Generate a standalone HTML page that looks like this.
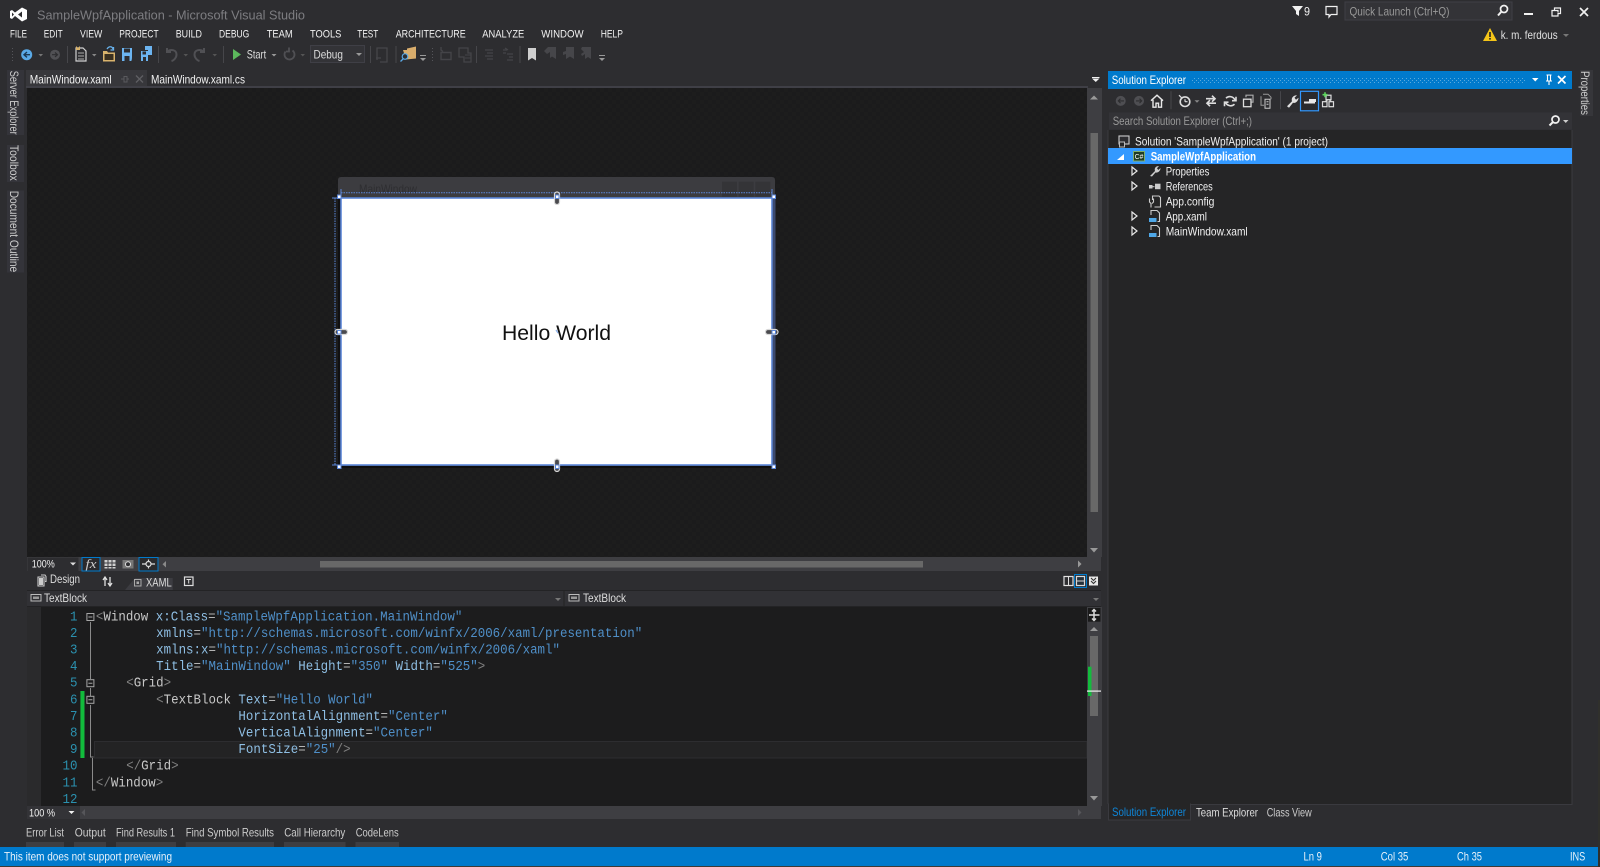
<!DOCTYPE html>
<html><head><meta charset="utf-8"><title>SampleWpfApplication - Microsoft Visual Studio</title>
<style>
html,body{margin:0;padding:0;background:#2d2d30;overflow:hidden}
svg{display:block;filter:blur(.3px)}
text{font-family:"Liberation Sans",sans-serif;font-size:12px;fill:#f1f1f1;white-space:pre}
.m{font-size:11px;fill:#f1f1f1}
.c{font-family:"Liberation Mono",monospace;font-size:14px;fill:#c8c8c8}
.n{fill:#2b91af;text-anchor:end}
.d{fill:#808080}.a{fill:#8fbfe4}.v{fill:#4f8fc8}.e{fill:#b4b4b4}
.dim{fill:#5a5a5e}
</style></head><body>
<svg width="1600" height="867" viewBox="0 0 1600 867" xmlns="http://www.w3.org/2000/svg">
<defs>
<pattern id="chk" width="8" height="8" patternUnits="userSpaceOnUse"><rect width="8" height="8" fill="#1b1b1c"/><rect width="4" height="4" fill="#1d1d1d"/><rect x="4" y="4" width="4" height="4" fill="#1d1d1d"/></pattern>
<pattern id="gr" width="4" height="4" patternUnits="userSpaceOnUse"><rect width="1" height="1" fill="#5aa9dd"/><rect x="2" y="2" width="1" height="1" fill="#5aa9dd"/></pattern>
<pattern id="tg" width="3" height="3" patternUnits="userSpaceOnUse"><rect width="1" height="1" fill="#55555a"/></pattern>
</defs>
<rect width="1600" height="867" fill="#2d2d30"/>

<!-- title bar -->
<path fill="#fff" fill-rule="evenodd" d="M10 11L12 10L15 12.5L22 7.5L27 10L27 19L22 21.5L15 16L12 19L10 18ZM22 11.5L18 14.5L22 17.5ZM12 12.5L14 14.5L12 16.5Z"/>
<text x="37" y="19.500" style="font-size:13px;fill:#7d7d81" textLength="268" lengthAdjust="spacingAndGlyphs">SampleWpfApplication - Microsoft Visual Studio</text>
<path fill="#f1f1f1" d="M1292 6h11l-4 5v5l-3-2v-3z"/>
<text x="1304" y="15.500" textLength="6" lengthAdjust="spacingAndGlyphs">9</text>
<path fill="none" stroke="#f1f1f1" stroke-width="1.2" d="M1326 6.500h11v8h-6l-2 2.500v-2.500h-3z"/>
<rect x="1345" y="2" width="167" height="18" fill="#333337" stroke="#3f3f46"/>
<text x="1349.500" y="15.500" style="fill:#999" textLength="100" lengthAdjust="spacingAndGlyphs">Quick Launch (Ctrl+Q)</text>
<circle cx="1504" cy="9" r="3.500" fill="none" stroke="#f1f1f1" stroke-width="1.7"/><path stroke="#f1f1f1" stroke-width="2" d="M1501.500 11.500L1498 15.500"/>
<rect x="1524" y="13" width="9" height="2" fill="#f1f1f1"/>
<path fill="none" stroke="#f1f1f1" stroke-width="1.2" d="M1554.500 10.500h-2.500v5.500h6v-3M1554.500 10.500v-2.500h6v5.500h-2.500M1554.500 10.500h3.500v2"/>
<path stroke="#f1f1f1" stroke-width="1.7" d="M1580 8l8 8M1588 8l-8 8"/>
<path d="M1490 28l7 13h-14z" fill="#f5c518"/><rect x="1489.200" y="32" width="1.600" height="5" fill="#222"/><rect x="1489.200" y="38" width="1.600" height="1.600" fill="#222"/>
<text x="1500.700" y="39" textLength="57" lengthAdjust="spacingAndGlyphs" style="fill:#e0e0e0">k. m. ferdous</text>
<path d="M1563 34h6l-3 3z" fill="#777"/>

<!-- menu -->
<g class="menu">
<text class="m" x="10" y="37.700" textLength="17" lengthAdjust="spacingAndGlyphs">FILE</text>
<text class="m" x="43.700" y="37.700" textLength="19" lengthAdjust="spacingAndGlyphs">EDIT</text>
<text class="m" x="80" y="37.700" textLength="22.300" lengthAdjust="spacingAndGlyphs">VIEW</text>
<text class="m" x="119.300" y="37.700" textLength="39.300" lengthAdjust="spacingAndGlyphs">PROJECT</text>
<text class="m" x="175.700" y="37.700" textLength="26.300" lengthAdjust="spacingAndGlyphs">BUILD</text>
<text class="m" x="219" y="37.700" textLength="30.300" lengthAdjust="spacingAndGlyphs">DEBUG</text>
<text class="m" x="266.700" y="37.700" textLength="26" lengthAdjust="spacingAndGlyphs">TEAM</text>
<text class="m" x="310" y="37.700" textLength="31.400" lengthAdjust="spacingAndGlyphs">TOOLS</text>
<text class="m" x="357.300" y="37.700" textLength="21" lengthAdjust="spacingAndGlyphs">TEST</text>
<text class="m" x="395.700" y="37.700" textLength="70" lengthAdjust="spacingAndGlyphs">ARCHITECTURE</text>
<text class="m" x="482.300" y="37.700" textLength="42" lengthAdjust="spacingAndGlyphs">ANALYZE</text>
<text class="m" x="541.300" y="37.700" textLength="42.300" lengthAdjust="spacingAndGlyphs">WINDOW</text>
<text class="m" x="600.700" y="37.700" textLength="22.300" lengthAdjust="spacingAndGlyphs">HELP</text>
</g>

<!-- toolbar -->
<rect x="11" y="46" width="4" height="15" fill="url(#tg)"/>
<circle cx="26.700" cy="54.700" r="5.500" fill="#5aa9e6"/><path d="M30 54.700h-5M27 52l-3 2.700 3 2.700" stroke="#1c3a55" stroke-width="1.400" fill="none"/>
<path d="M38.500 54h4.500l-2.250 2.500z" fill="#777"/>
<circle cx="55" cy="54.700" r="5" fill="#505054"/><path d="M52 54.700h5M55 52.500l2.500 2.200-2.500 2.200" stroke="#2d2d30" stroke-width="1.200" fill="none"/>
<rect x="67" y="46" width="1" height="17" fill="#46464a"/>
<path d="M76 48h7l3 3v10h-10z" fill="#2d2d30" stroke="#d0d0d0" stroke-width="1.200"/><path d="M76 46l2 2 2-2v4h-4z" fill="#d9b36c"/><path d="M78 53h6M78 56h6M78 59h6" stroke="#aaa"/>
<path d="M92 54h4.500l-2.250 2.500z" fill="#888"/>
<path d="M103 51h4l1 1.500h7v9h-12z" fill="#d9b36c"/><rect x="104.500" y="54" width="9" height="6" fill="#3a3020"/><path d="M107 49c2-3 5-3 6 0M113.500 47v3h-3" stroke="#68b2ec" stroke-width="1.300" fill="none"/>
<path d="M122 48h10v8c0 1 0 5-1 5h-9z" fill="#6cb4f0"/><rect x="124" y="48.500" width="6" height="4" fill="#2d2d30"/><rect x="124.500" y="56" width="5" height="5" fill="#2d2d30"/>
<path d="M141 51h7v10h-7z" fill="#6cb4f0"/><path d="M145 46h7v9h-4v-5h-3z" fill="#6cb4f0"/><rect x="142.500" y="51.500" width="3.500" height="3" fill="#2d2d30"/><rect x="143" y="57" width="3" height="4" fill="#2d2d30"/>
<rect x="158" y="46" width="1" height="17" fill="#46464a"/>
<path d="M167 48v4h4M167.500 51.500c3-2.500 9-2 9 3 0 3-2.500 6-5 6.500" stroke="#505054" stroke-width="2" fill="none"/>
<path d="M183.500 54h4.500l-2.250 2.500z" fill="#555"/>
<path d="M204 48v4h-4M203.500 51.500c-3-2.500-9-2-9 3 0 3 2.500 6 5 6.500" stroke="#505054" stroke-width="2" fill="none"/>
<path d="M212.500 54h4.500l-2.250 2.500z" fill="#555"/>
<rect x="223" y="46" width="1" height="17" fill="#46464a"/>
<path d="M233 49v11l8-5.500z" fill="#5cb85c"/>
<text x="246.700" y="58.500" textLength="19.500" lengthAdjust="spacingAndGlyphs" style="fill:#ddd">Start</text>
<path d="M271.500 54h5l-2.500 2.500z" fill="#999"/>
<path d="M292.500 50.500a5 5 0 1 1-7 1M289 47.500v4h-3" stroke="#505054" stroke-width="1.800" fill="none"/>
<path d="M300.500 54h4.500l-2.250 2.500z" fill="#555"/>
<rect x="310.500" y="45.500" width="54" height="17" fill="#333337" stroke="#3f3f46"/>
<text x="313.500" y="58.500" textLength="29.400" lengthAdjust="spacingAndGlyphs" style="fill:#ddd">Debug</text>
<path d="M356 53h6l-3 3z" fill="#999"/>
<rect x="370" y="46" width="1" height="17" fill="#46464a"/>
<path d="M377 60v-12h10v14h-7M376 58h5" stroke="#46464a" stroke-width="1.300" fill="none"/>
<rect x="395.500" y="46" width="1" height="17" fill="#46464a"/>
<path d="M403 50h4v-1.500l9-2v12l-10 1z" fill="#d9ad6c"/><circle cx="405" cy="56.500" r="2.800" fill="#2d2d30" stroke="#5aa9e6" stroke-width="1.200"/><path d="M403 59l-2.500 2.500" stroke="#5aa9e6" stroke-width="1.300"/>
<rect x="420" y="55" width="6" height="1" fill="#999"/><path d="M420 58h6l-3 3z" fill="#999"/>
<rect x="430" y="46" width="4" height="15" fill="url(#tg)"/>
<path d="M441 47v3l2 1.500M441 52.500h10v7h-10z" stroke="#444448" stroke-width="1.400" fill="none"/>
<path d="M459 48h9v5h3v9h-7v-5h-5z" stroke="#444448" stroke-width="1.300" fill="none"/><path d="M465 55h6M465 58h6" stroke="#444448"/>
<rect x="476" y="46" width="1" height="17" fill="#46464a"/>
<path d="M485 50h8M487 53h6M485 56h8M487 59h6" stroke="#444448" stroke-width="1.300"/>
<path d="M503 50h4M503 53h3M507 54h6M509 57h4M507 60h6M505 48l3 2" stroke="#444448" stroke-width="1.300" fill="none"/>
<rect x="519.500" y="46" width="1" height="17" fill="#46464a"/>
<path d="M528 48h8v12.500l-4-2.500-4 2.500z" fill="#cfcfcf"/>
<path d="M548 47h8v12l-4-2.500-2 1.500v-6l-3 2-3-3 3-3z" fill="#46464a"/>
<path d="M566 47h8v12l-4-2.500-4 2.500v-5l-3 1v-3l3-1z" fill="#46464a"/>
<path d="M584 47h7v12l-3-2-3 2v-5l-3 2-1-2 3-2-3-3 1-2z" fill="#46464a"/>
<rect x="599" y="55" width="6" height="1" fill="#999"/><path d="M599 58h6l-3 3z" fill="#999"/>

<!-- left strip -->
<rect x="7" y="70" width="17" height="65" fill="#34343a"/>
<rect x="7" y="145" width="17" height="37" fill="#34343a"/>
<rect x="7" y="190.500" width="17" height="82" fill="#34343a"/>
<text transform="translate(10,70.700) rotate(90)" textLength="64" lengthAdjust="spacingAndGlyphs" style="fill:#ccc">Server Explorer</text>
<text transform="translate(10,145) rotate(90)" textLength="35.700" lengthAdjust="spacingAndGlyphs" style="fill:#ccc">Toolbox</text>
<text transform="translate(10,190.700) rotate(90)" textLength="81.500" lengthAdjust="spacingAndGlyphs" style="fill:#ccc">Document Outline</text>

<!-- tabs -->
<rect x="26" y="70" width="121" height="17" fill="#37373b"/>
<text x="29.700" y="83.500" textLength="82" lengthAdjust="spacingAndGlyphs">MainWindow.xaml</text>
<path d="M121 79h3v-2.500h3v5.500h-3v-3M127 79h2" stroke="#5a5a5e" stroke-width="1" fill="none"/>
<path d="M136 75.500l7 7M143 75.500l-7 7" stroke="#5f5f63" stroke-width="1.300"/>
<text x="151" y="83.500" textLength="94" lengthAdjust="spacingAndGlyphs">MainWindow.xaml.cs</text>
<path d="M1092 78.500h7.500l-3.750 3.500z" fill="#f1f1f1"/>
<rect x="1092" y="77" width="7.500" height="1" fill="#f1f1f1"/>
<rect x="26" y="86" width="1062" height="2" fill="#3f3f46"/>

<!-- designer -->
<rect x="27" y="88" width="1060" height="469" fill="url(#chk)"/>
<rect x="1087" y="88" width="15" height="469" fill="#3e3e42"/>
<path d="M1090 99.500h8l-4-4z" fill="#999"/>
<rect x="1090.500" y="133" width="7.500" height="379" fill="#686868"/>
<path d="M1090 548h8l-4 4.500z" fill="#999"/>

<!-- designer window -->
<path d="M338 180q0-3 3-3h431q3 0 3 3v288h-437z" fill="#3c3c40"/>
<rect x="722" y="181.700" width="15" height="15" fill="#343437"/><rect x="738.700" y="181.700" width="15" height="15" fill="#343437"/><rect x="755.300" y="181.700" width="15" height="15" fill="#343437"/>
<text x="359" y="193" textLength="58" lengthAdjust="spacingAndGlyphs" style="fill:#2e2e31">MainWindow</text>
<rect x="338" y="198" width="3" height="270" fill="#101012"/>
<rect x="773" y="198" width="2.500" height="270" fill="#3c4a70"/>
<rect x="338" y="466" width="437" height="2" fill="#0f0f10"/>
<rect x="341" y="198" width="431" height="267" fill="#fff"/>
<rect x="341" y="198" width="431" height="267" fill="none" stroke="#5b86d8" stroke-width="1.600"/>
<path d="M341 192.700H772" stroke="#5b86d8" stroke-dasharray="1.500 1" fill="none"/>
<path d="M335 198V465" stroke="#5b86d8" stroke-dasharray="1.500 1" fill="none"/>
<path d="M332 198h8M332 465h8M341 189v8M772 189v8" stroke="#5b86d8"/>
<text x="556.500" y="340" text-anchor="middle" textLength="109" lengthAdjust="spacingAndGlyphs" style="font-size:21px;fill:#111">Hello World</text>
<g fill="#4a4a4e" stroke="#d8d8d8" stroke-width="1.200">
<rect x="554.500" y="192" width="5" height="12.500" rx="2.500"/>
<rect x="554.500" y="459" width="5" height="12.500" rx="2.500"/>
<rect x="335" y="329.500" width="12.500" height="5" rx="2.500"/>
<rect x="765.500" y="329.500" width="12.500" height="5" rx="2.500"/>
</g>
<g fill="#fff" stroke="#5b86d8">
<rect x="337.500" y="195" width="3.500" height="3.500"/><rect x="772" y="195" width="3.500" height="3.500"/>
<rect x="337.500" y="465" width="3.500" height="3.500"/><rect x="772" y="465" width="3.500" height="3.500"/>
<rect x="555.500" y="195" width="3.500" height="3.500"/><rect x="555.500" y="465" width="3.500" height="3.500"/>
<rect x="337.500" y="330.500" width="3.500" height="3.500"/><rect x="772" y="330.500" width="3.500" height="3.500"/>
</g>
<path d="M556 330l2 3" stroke="#8ab0ea" stroke-width="1.200"/>

<!-- designer bottom bar -->
<rect x="27" y="557" width="1074" height="14" fill="#3e3e42"/>
<rect x="27.500" y="557.500" width="51" height="13.500" fill="#2d2d30"/>
<text x="31.700" y="567.500" textLength="23" lengthAdjust="spacingAndGlyphs" style="font-size:11px">100%</text>
<path d="M70 562.500h6l-3 3z" fill="#ddd"/>
<rect x="82" y="557.500" width="18" height="13.500" fill="#2a2a2c" stroke="#007acc"/>
<text x="85.500" y="568" textLength="11" lengthAdjust="spacingAndGlyphs" style="font-family:'Liberation Serif',serif;font-style:italic;font-size:13px;fill:#ccc">fx</text>
<g fill="#d0d0d0"><rect x="104.500" y="560" width="3" height="2.500"/><rect x="108.500" y="560" width="3" height="2.500"/><rect x="112.500" y="560" width="3" height="2.500"/><rect x="104.500" y="563.500" width="3" height="2.500"/><rect x="108.500" y="563.500" width="3" height="2.500"/><rect x="112.500" y="563.500" width="3" height="2.500"/><rect x="104.500" y="567" width="3" height="1.500"/><rect x="108.500" y="567" width="3" height="1.500"/><rect x="112.500" y="567" width="3" height="1.500"/></g>
<rect x="122.500" y="560" width="11" height="8.500" fill="#777"/><circle cx="128" cy="564.200" r="2.500" fill="#2d2d30" stroke="#ddd"/>
<rect x="139" y="557.500" width="19" height="13.500" fill="#2a2a2c" stroke="#007acc"/>
<path d="M142 564h13M148.500 559.500v9" stroke="#ddd" stroke-width="1.200"/><circle cx="148.500" cy="564" r="2.500" fill="#2a2a2c" stroke="#ddd" stroke-width="1.200"/>
<path d="M166 561v6.500l-3.500-3.250z" fill="#8a8a8a"/>
<rect x="320" y="561" width="603" height="6.500" fill="#686868"/>
<path d="M1078 560.500v7l3.500-3.500z" fill="#999"/>

<!-- design/xaml row -->
<path d="M41 575h4l1 1.500v5h-1M38 577h6v9h-6z" fill="none" stroke="#ccc" stroke-width="1.100"/><rect x="39" y="578" width="4" height="7" fill="#ccc"/>
<text x="50" y="583" textLength="30" lengthAdjust="spacingAndGlyphs" style="fill:#ddd">Design</text>
<path d="M105 586v-8M103 580l2-3 2 3M110 577v8M108 583l2 3 2-3" stroke="#e0e0e0" stroke-width="1.300" fill="none"/>
<path d="M125 590l10-12h37.700v12z" fill="#3c3c41"/>
<rect x="134.500" y="579.500" width="6.500" height="6.500" fill="none" stroke="#aaa"/><rect x="136.500" y="581.500" width="2.500" height="2.500" fill="#aaa"/>
<text x="146" y="586.500" textLength="25.700" lengthAdjust="spacingAndGlyphs" style="fill:#ddd">XAML</text>
<rect x="184.500" y="577" width="8.500" height="8.500" fill="none" stroke="#ddd" stroke-width="1.200"/><path d="M186.500 579.500h4.500M188.700 579.500v4" stroke="#ddd"/>
<rect x="1064" y="576.500" width="9" height="9" fill="none" stroke="#e0e0e0" stroke-width="1.200"/><rect x="1068" y="577" width="1" height="8" fill="#e0e0e0"/>
<rect x="1074.500" y="574.500" width="12" height="13" fill="#24303a" stroke="#007acc"/><rect x="1076.500" y="576.500" width="8" height="9" fill="none" stroke="#d8d8d8" stroke-width="1.200"/><rect x="1077" y="580.500" width="7" height="1" fill="#d8d8d8"/>
<rect x="1089" y="576.500" width="9" height="9" fill="#e8e8e8"/><path d="M1091 578l2.500 2.500 2.500-2.500M1091 581l2.500 2.500 2.500-2.500" stroke="#333" fill="none" stroke-width="1.100"/>

<!-- nav bar -->
<rect x="27" y="590" width="1074" height="1" fill="#232325"/>
<rect x="27" y="591" width="1074" height="15" fill="#313135"/>
<rect x="27" y="606" width="1074" height="1" fill="#232325"/>
<rect x="563" y="591" width="2" height="15" fill="#2a2a2c"/>
<rect x="31" y="594.500" width="10" height="6.500" fill="none" stroke="#bbb"/><rect x="33" y="596.500" width="6" height="2.500" fill="#999"/>
<text x="44" y="602" textLength="43" lengthAdjust="spacingAndGlyphs" style="fill:#ddd">TextBlock</text>
<path d="M555 598h6l-3 3z" fill="#777"/>
<rect x="569" y="594.500" width="10" height="6.500" fill="none" stroke="#bbb"/><rect x="571" y="596.500" width="6" height="2.500" fill="#999"/>
<text x="583" y="602" textLength="43" lengthAdjust="spacingAndGlyphs" style="fill:#ddd">TextBlock</text>
<path d="M1093 598h6l-3 3z" fill="#777"/>

<!-- code area -->
<rect x="27" y="607" width="14" height="199" fill="#2a2a2c"/>
<rect x="41" y="607" width="1046" height="199" fill="#1c1c1d"/>
<rect x="94.500" y="741.500" width="992.500" height="16.500" fill="#232324" stroke="#2d2d30"/>
<rect x="80.400" y="691" width="4.100" height="67" fill="#12bc3c"/>
<path d="M90.500 622V679M90.500 688V696M90.500 705V757h3M92.500 758V790h3" stroke="#8a8a8a" fill="none"/>
<g fill="#1c1c1d" stroke="#a5a5a5"><rect x="86.900" y="613.500" width="7" height="7"/><rect x="86.900" y="679.700" width="7" height="7"/><rect x="86.900" y="696.300" width="7" height="7"/></g>
<path d="M88.400 617h4M88.400 683.200h4M88.400 699.800h4" stroke="#a5a5a5"/>
<g transform="translate(0,-.7) scale(.8905 1)">
<g class="ln">
<text class="c n" x="87" y="621">1</text><text class="c n" x="87" y="637.600">2</text><text class="c n" x="87" y="654.200">3</text><text class="c n" x="87" y="670.800">4</text><text class="c n" x="87" y="687.400">5</text><text class="c n" x="87" y="704">6</text><text class="c n" x="87" y="720.600">7</text><text class="c n" x="87" y="737.200">8</text><text class="c n" x="87" y="753.800">9</text><text class="c n" x="87" y="770.400">10</text><text class="c n" x="87" y="787">11</text><text class="c n" x="87" y="803.600">12</text>
</g>
<text class="c" x="107.700" y="621"><tspan class="d">&lt;</tspan>Window <tspan class="a">x:Class</tspan><tspan class="e">=</tspan><tspan class="v">"SampleWpfApplication.MainWindow"</tspan></text>
<text class="c" x="175.340" y="637.600"><tspan class="a">xmlns</tspan><tspan class="e">=</tspan><tspan class="v">"http://schemas.microsoft.com/winfx/2006/xaml/presentation"</tspan></text>
<text class="c" x="175.340" y="654.200"><tspan class="a">xmlns:x</tspan><tspan class="e">=</tspan><tspan class="v">"http://schemas.microsoft.com/winfx/2006/xaml"</tspan></text>
<text class="c" x="175.340" y="670.800"><tspan class="a">Title</tspan><tspan class="e">=</tspan><tspan class="v">"MainWindow"</tspan> <tspan class="a">Height</tspan><tspan class="e">=</tspan><tspan class="v">"350"</tspan> <tspan class="a">Width</tspan><tspan class="e">=</tspan><tspan class="v">"525"</tspan><tspan class="d">&gt;</tspan></text>
<text class="c" x="141.740" y="687.400"><tspan class="d">&lt;</tspan>Grid<tspan class="d">&gt;</tspan></text>
<text class="c" x="175.340" y="704"><tspan class="d">&lt;</tspan>TextBlock <tspan class="a">Text</tspan><tspan class="e">=</tspan><tspan class="v">"Hello World"</tspan></text>
<text class="c" x="267.740" y="720.600"><tspan class="a">HorizontalAlignment</tspan><tspan class="e">=</tspan><tspan class="v">"Center"</tspan></text>
<text class="c" x="267.740" y="737.200"><tspan class="a">VerticalAlignment</tspan><tspan class="e">=</tspan><tspan class="v">"Center"</tspan></text>
<text class="c" x="267.740" y="753.800"><tspan class="a">FontSize</tspan><tspan class="e">=</tspan><tspan class="v">"25"</tspan><tspan class="d">/&gt;</tspan></text>
<text class="c" x="141.740" y="770.400"><tspan class="d">&lt;/</tspan>Grid<tspan class="d">&gt;</tspan></text>
<text class="c" x="107.700" y="787"><tspan class="d">&lt;/</tspan>Window<tspan class="d">&gt;</tspan></text>
</g>

<!-- code scroll -->
<rect x="1087" y="607" width="15" height="199" fill="#3e3e42"/>
<rect x="1088" y="608" width="12.500" height="13.700" fill="#1a1a1a"/>
<path d="M1094 609.500v11M1089 615h10.500M1092 611.500l2-2 2 2M1092 618.500l2 2 2-2" stroke="#ddd" stroke-width="1.500" fill="none"/>
<path d="M1090 631h8l-4-4z" fill="#999"/>
<rect x="1090" y="636" width="8" height="80" fill="#686868"/>
<rect x="1088" y="666.700" width="3.500" height="29.300" fill="#12bc3c"/>
<rect x="1087" y="690.500" width="14" height="1.200" fill="#f0f0f0"/>
<path d="M1090 796h8l-4 4.500z" fill="#999"/>

<!-- code hscroll -->
<rect x="27" y="806" width="1074" height="13" fill="#3e3e42"/>
<rect x="27" y="806" width="53" height="13" fill="#333337"/>
<text x="29" y="816.500" textLength="26" lengthAdjust="spacingAndGlyphs" style="font-size:11px">100 %</text>
<path d="M68.500 811h6l-3 3z" fill="#f1f1f1"/>
<path d="M85 809v7l-3.500-3.500z" fill="#56565a"/>
<path d="M1078 809v7l3.500-3.500z" fill="#56565a"/>

<!-- bottom tool tabs -->
<g fill="#3e3e42"><rect x="26" y="842" width="38" height="5"/><rect x="74" y="842" width="32" height="5"/><rect x="116" y="842" width="60" height="5"/><rect x="185.700" y="842" width="88.300" height="5"/><rect x="284" y="842" width="61.500" height="5"/><rect x="355.500" y="842" width="43.500" height="5"/></g>
<g>
<text x="26" y="836.500" textLength="38" lengthAdjust="spacingAndGlyphs" style="fill:#ccc">Error List</text>
<text x="74.700" y="836.500" textLength="31" lengthAdjust="spacingAndGlyphs" style="fill:#ccc">Output</text>
<text x="116" y="836.500" textLength="59" lengthAdjust="spacingAndGlyphs" style="fill:#ccc">Find Results 1</text>
<text x="185.700" y="836.500" textLength="88.300" lengthAdjust="spacingAndGlyphs" style="fill:#ccc">Find Symbol Results</text>
<text x="284.300" y="836.500" textLength="61" lengthAdjust="spacingAndGlyphs" style="fill:#ccc">Call Hierarchy</text>
<text x="355.700" y="836.500" textLength="43" lengthAdjust="spacingAndGlyphs" style="fill:#ccc">CodeLens</text>
</g>

<!-- solution explorer -->
<rect x="1108" y="71" width="464" height="18" fill="#007acc"/>
<text x="1111.700" y="84" textLength="74.300" lengthAdjust="spacingAndGlyphs" style="fill:#fff">Solution Explorer</text>
<rect x="1192" y="77" width="334" height="6" fill="url(#gr)"/>
<path d="M1532 78h6.500l-3.250 3.500z" fill="#fff"/>
<path d="M1546.500 75h5M1547.500 75v5.500M1550.500 75v5.500M1546 81h6M1549 81v4" stroke="#fff" stroke-width="1.100" fill="none"/>
<path d="M1558 76l7.500 7.500M1565.500 76l-7.500 7.500" stroke="#fff" stroke-width="1.700"/>
<rect x="1108" y="89" width="464" height="23.500" fill="#2d2d30"/>
<g transform="translate(0,-.8)">
<circle cx="1120.700" cy="101.700" r="5" fill="#4e4e52"/><path d="M1124 101.700h-5.500M1120.500 99.500l-2.200 2.200 2.200 2.200" stroke="#2d2d30" stroke-width="1.100" fill="none"/>
<circle cx="1139" cy="101.700" r="5" fill="#4e4e52"/><path d="M1136 101.700h5.500M1139.500 99.500l2.200 2.200-2.200 2.200" stroke="#2d2d30" stroke-width="1.100" fill="none"/>
<path d="M1151 101.500l6-5.500 6 5.500M1153 100.500v7.500h3v-4h2.500v4h3v-7.500" stroke="#e8e8e8" stroke-width="1.400" fill="none"/>
<rect x="1170.500" y="92" width="1" height="18" fill="#46464a"/>
<circle cx="1185" cy="102.500" r="4.800" fill="none" stroke="#ddd" stroke-width="1.600"/><path d="M1179 96l3 3M1185 102.500v-2.500M1185 102.500h2.500" stroke="#ddd" stroke-width="1.200"/>
<path d="M1194.500 101h5l-2.500 2.500z" fill="#888"/>
<path d="M1206 99.500h9M1212 96.500l3 3-3 3M1216 104h-9M1210 101l-3 3 3 3" stroke="#ddd" stroke-width="1.700" fill="none"/>
<path d="M1226 99a5.500 5.500 0 0 1 9 2M1234.500 105a5.500 5.500 0 0 1-9-2M1236 97.500v4h-4M1224.500 107v-4h4" stroke="#ddd" stroke-width="1.600" fill="none"/>
<rect x="1243.500" y="100" width="7.500" height="7.500" fill="none" stroke="#ddd" stroke-width="1.300"/><path d="M1246 98v-2h7v7h-1.500" fill="none" stroke="#aaa" stroke-width="1.200"/>
<path d="M1263 95h5l3 3v2M1261 97v9h3" stroke="#999" fill="none"/><path d="M1265 100h5v9h-5z" fill="none" stroke="#ccc"/><path d="M1266.500 102.500h2M1266.500 105h2" stroke="#ccc"/>
<rect x="1280" y="92" width="1" height="18" fill="#46464a"/>
<path d="M1287 107l5-5c-1-3 1-6 5-6l-2.500 2.500 1.500 2 2.500-2c0 3-3 6-5.500 5l-4 5z" fill="#e0e0e0"/>
<rect x="1322.500" y="102.500" width="4.500" height="5" fill="none" stroke="#ddd" stroke-width="1.200"/><rect x="1329" y="102.500" width="4.500" height="5" fill="none" stroke="#ddd" stroke-width="1.200"/><rect x="1326" y="96" width="5" height="4.500" fill="none" stroke="#ddd" stroke-width="1.200"/><path d="M1328 100.500l-3 2M1329 100.500l2.500 2" stroke="#ddd"/>
<path d="M1325 93v5M1322.500 95.500h5" stroke="#5cd65c" stroke-width="1.600"/>
</g>
<rect x="1300.500" y="91.300" width="18" height="19.500" fill="#2a2a2c" stroke="#3399ff" stroke-width="1.200"/>
<path d="M1304 102.500h11" stroke="#e8e8e8" stroke-width="2"/><rect x="1309" y="99" width="7" height="3" fill="#e8e8e8"/>
<rect x="1109" y="112.500" width="463" height="17" fill="#333337"/>
<text x="1112.700" y="125" textLength="139.300" lengthAdjust="spacingAndGlyphs" style="fill:#999">Search Solution Explorer (Ctrl+;)</text>
<circle cx="1555.500" cy="119.500" r="3.500" fill="none" stroke="#f1f1f1" stroke-width="1.700"/><path d="M1553 122l-3.500 3.500" stroke="#f1f1f1" stroke-width="2"/>
<path d="M1563 120h5.500l-2.750 3z" fill="#ccc"/>
<rect x="1108" y="130" width="464" height="674" fill="#252526" />
<path d="M1108 130V804M1572 130V805M1108 804.500H1190M1190 804.500H1572" stroke="#3a3a3f" fill="none"/>
<rect x="1108" y="148" width="464" height="16" fill="#3399ff"/>
<rect x="1119" y="136" width="10" height="8" fill="#2d2d30" stroke="#ccc" stroke-width="1.100"/><rect x="1119.500" y="142" width="5" height="5" fill="#252526" stroke="#bbb"/>
<text x="1135" y="145.300" textLength="193" lengthAdjust="spacingAndGlyphs">Solution 'SampleWpfApplication' (1 project)</text>
<path d="M1117 160h7v-6z" fill="#fff"/>
<rect x="1133.500" y="151.500" width="11" height="9.500" fill="#1f3c26" stroke="#7fae6c"/>
<text x="1134.800" y="159" style="font-size:7.500px;fill:#fff" textLength="8.500" lengthAdjust="spacingAndGlyphs">C#</text>
<text x="1150.700" y="160.400" textLength="105.300" lengthAdjust="spacingAndGlyphs" style="font-weight:bold;fill:#fff">SampleWpfApplication</text>
<g fill="none" stroke="#e8e8e8" stroke-width="1.200" transform="translate(0,-.5)">
<path d="M1132 167.500l5 4-5 4z"/><path d="M1132 182.500l5 4-5 4z"/><path d="M1132 212.500l5 4-5 4z"/><path d="M1132 227.500l5 4-5 4z"/>
</g>
<path d="M1150 176l5-5c-1-3 1-5 4-5l-2 2.200 1.300 1.800 2.200-2c0 3-2.500 5-5 4.500l-3.500 4z" fill="#ccc"/>
<text x="1165.700" y="175.400" textLength="43.700" lengthAdjust="spacingAndGlyphs">Properties</text>
<rect x="1149" y="185" width="3.500" height="3.500" fill="#ccc"/><rect x="1152.500" y="186.200" width="2" height="1" fill="#ccc"/><rect x="1155" y="183.700" width="5.500" height="5.500" fill="#ccc"/>
<text x="1165.700" y="190.400" textLength="47" lengthAdjust="spacingAndGlyphs">References</text>
<path d="M1152.500 200v-4h6.500l1.500 1.500v9.500h-6M1149.500 198.500v3.500l1.500 1.500v4M1153.500 198.500v3.500l-1.500 1.500" fill="none" stroke="#ccc" stroke-width="1.100"/>
<text x="1165.700" y="205.400" textLength="48.700" lengthAdjust="spacingAndGlyphs">App.config</text>
<path d="M1151 215v-4.500h6l2.500 2.500v8.500h-2" fill="none" stroke="#ccc" stroke-width="1.100"/><rect x="1149" y="218" width="7.500" height="4" fill="#4fa8e8"/>
<text x="1165.700" y="220.400" textLength="41.300" lengthAdjust="spacingAndGlyphs">App.xaml</text>
<path d="M1151 230v-4.500h6l2.500 2.500v8.500h-2" fill="none" stroke="#ccc" stroke-width="1.100"/><rect x="1149" y="233" width="7.500" height="4" fill="#4fa8e8"/>
<text x="1165.700" y="235.400" textLength="82" lengthAdjust="spacingAndGlyphs">MainWindow.xaml</text>

<!-- SE tabs -->
<rect x="1108.500" y="804" width="82" height="16" fill="#252526" stroke="#3a3a3f"/>
<rect x="1109" y="803" width="81" height="2" fill="#252526"/>
<text x="1112" y="816" textLength="74" lengthAdjust="spacingAndGlyphs" style="fill:#0e86d8">Solution Explorer</text>
<text x="1196" y="816.300" textLength="62" lengthAdjust="spacingAndGlyphs" style="fill:#ddd">Team Explorer</text>
<text x="1266.700" y="816.300" textLength="45" lengthAdjust="spacingAndGlyphs" style="fill:#ccc">Class View</text>

<!-- right strip -->
<rect x="1580" y="70" width="13" height="46" fill="#36363a"/>
<text transform="translate(1581,71) rotate(90)" textLength="44" lengthAdjust="spacingAndGlyphs" style="fill:#ccc">Properties</text>

<!-- status -->
<rect x="0" y="847" width="1600" height="19" fill="#007acc"/>
<text x="4" y="860.500" textLength="168" lengthAdjust="spacingAndGlyphs" style="fill:#e8f2fa">This item does not support previewing</text>
<text x="1303.500" y="860.500" textLength="18.400" lengthAdjust="spacingAndGlyphs" style="fill:#e8f2fa">Ln 9</text>
<text x="1380.800" y="860.500" textLength="27.500" lengthAdjust="spacingAndGlyphs" style="fill:#e8f2fa">Col 35</text>
<text x="1457" y="860.500" textLength="25" lengthAdjust="spacingAndGlyphs" style="fill:#e8f2fa">Ch 35</text>
<text x="1570" y="860.500" textLength="15.300" lengthAdjust="spacingAndGlyphs" style="fill:#e8f2fa">INS</text>
<rect x="0" y="866" width="1600" height="1" fill="#3f3a35"/>
<rect x="1598" y="700" width="2" height="167" fill="#30302c"/>
</svg>
</body></html>
